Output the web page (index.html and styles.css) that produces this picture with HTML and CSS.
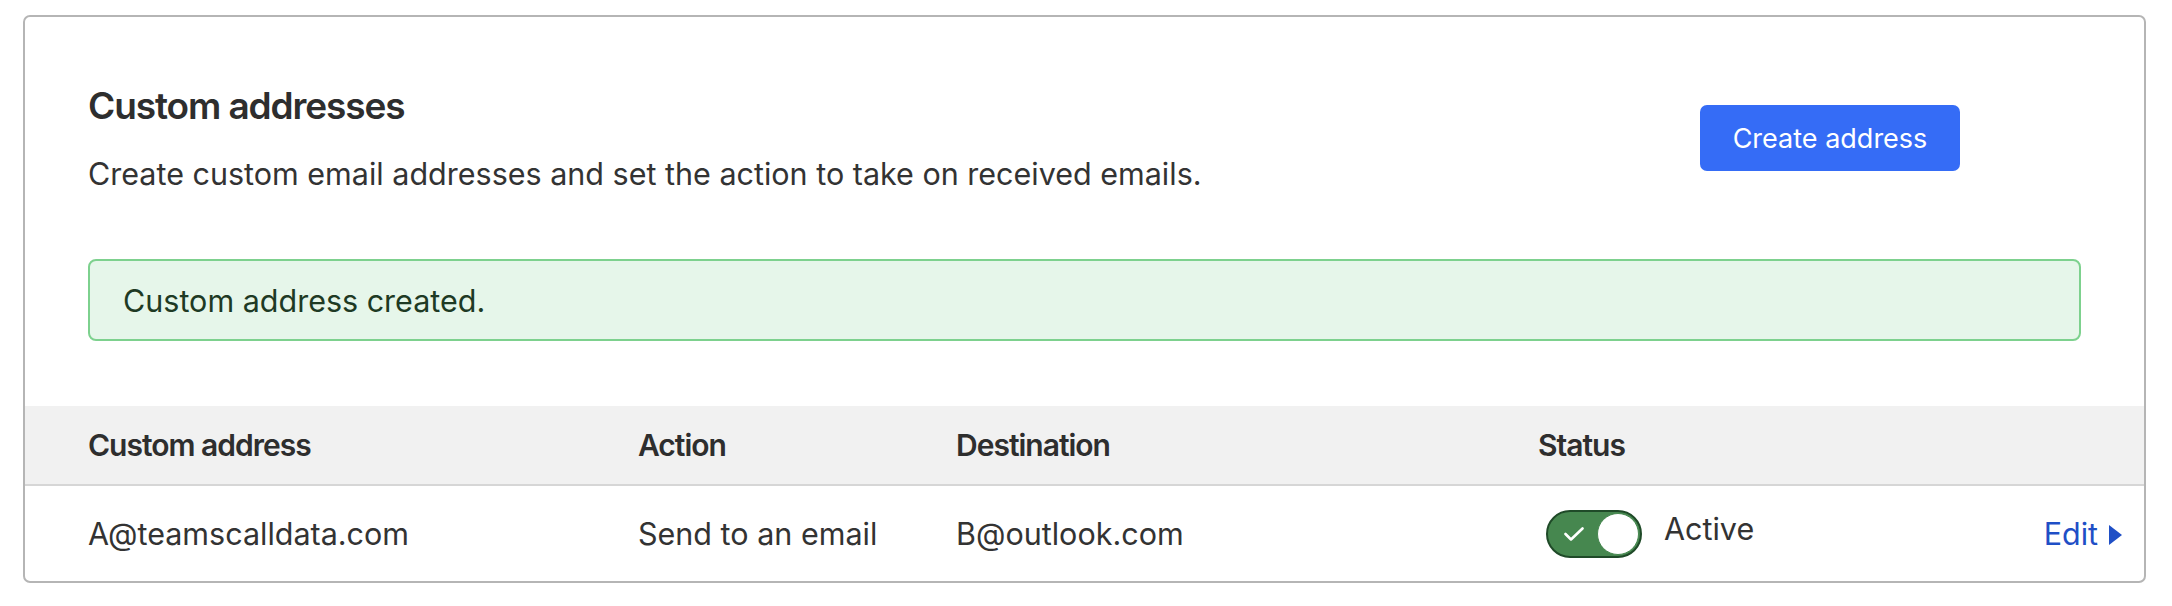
FILE: index.html
```html
<!DOCTYPE html>
<html lang="en">
<head>
<meta charset="utf-8">
<title>Custom addresses</title>
<link rel="stylesheet" href="styles.css">
</head>
<body>
<div class="page">
  <section class="card">
    <div class="head">
      <div class="head-text">
        <h1 class="title">Custom addresses</h1>
        <p class="desc">Create custom email addresses and set the action to take on received emails.</p>
      </div>
      <button class="btn-primary" type="button">Create address</button>
    </div>
    <div class="alert">Custom address created.</div>
    <div class="table">
      <div class="row row-head">
        <div class="cell">Custom address</div>
        <div class="cell">Action</div>
        <div class="cell">Destination</div>
        <div class="cell">Status</div>
        <div class="cell"></div>
      </div>
      <div class="row row-body">
        <div class="cell">A@teamscalldata.com</div>
        <div class="cell">Send to an email</div>
        <div class="cell">B@outlook.com</div>
        <div class="cell status">
          <span class="toggle">
            <svg class="check" viewBox="0 0 20 14" width="20" height="14"><path d="M1.5 7 L7 12.5 L18.5 1.5" fill="none" stroke="#fff" stroke-width="2.6" stroke-linecap="round" stroke-linejoin="round"/></svg>
            <span class="knob"></span>
          </span>
          <span class="status-label">Active</span>
        </div>
        <div class="cell edit-cell">
          <a class="edit" href="#">Edit<svg class="caret" viewBox="0 0 13 20" width="13" height="20"><path d="M0 0 L13 10 L0 20 Z" fill="#1f4fc6"/></svg></a>
        </div>
      </div>
    </div>
  </section>
</div>
</body>
</html>
```
FILE: styles.css
```css
* { box-sizing: border-box; }
html, body { margin: 0; padding: 0; background: #ffffff; }
body {
  font-family: Inter, "Noto Sans", "Liberation Sans", sans-serif;
  color: #333333;
}
.page {
  padding: 15px 26px 23px 23px;
}
.card {
  border: 2px solid #b5b5b5;
  border-radius: 7px;
  background: #fff;
  overflow: hidden;
}
.head {
  display: flex;
  align-items: center;
  justify-content: space-between;
  padding: 65px 184px 0 63px;
}
.title {
  margin: 0;
  font-size: 37px;
  line-height: 48px;
  font-weight: 600;
  letter-spacing: -1.1px;
  color: #2e2e2e;
}
.desc {
  margin: 24px 0 0;
  font-size: 30.5px;
  line-height: 40px;
  font-weight: 400;
  color: #333;
}
.btn-primary {
  width: 260px;
  height: 66px;
  border: 0;
  border-radius: 7px;
  background: #356cf6;
  color: #fff;
  font-family: inherit;
  font-size: 27px;
  font-weight: 400;
  cursor: pointer;
}
.alert {
  margin: 65px 63px 0;
  height: 82px;
  display: flex;
  align-items: center;
  padding: 0 33px;
  border: 2px solid #7dd18e;
  border-radius: 8px;
  background: #e6f6ea;
  color: #1e3a24;
  font-size: 30.5px;
}
.table {
  margin-top: 65px;
}
.row {
  display: grid;
  grid-template-columns: 550px 318px 582px 1fr auto;
  align-items: center;
  padding: 0 22px 0 63px;
}
.row-head {
  height: 80px;
  background: #f1f1f1;
  border-bottom: 2px solid #d6d6d6;
  font-weight: 600;
  font-size: 30px;
  letter-spacing: -1px;
  color: #2e2e2e;
}
.row-body {
  height: 95px;
  font-size: 30.5px;
  color: #333;
}
.status {
  display: flex;
  align-items: center;
  gap: 22px;
  padding-left: 8px;
}
.toggle {
  position: relative;
  display: inline-flex;
  align-items: center;
  flex: none;
  width: 96px;
  height: 48px;
  border-radius: 24px;
  background: #46874f;
  border: 2px solid #1f4a28;
  padding-left: 16px;
}
.check { display: block; flex: none; width: 20px; height: 14px; }
.knob {
  position: absolute;
  right: 1px;
  top: 1px;
  width: 42px;
  height: 42px;
  border-radius: 50%;
  background: #fff;
  border: 1.5px solid #46874f;
}
.status-label {
  margin-top: -10px;
  color: #333;
}
.edit-cell {
  display: flex;
  justify-content: flex-end;
}
.edit {
  display: inline-flex;
  align-items: center;
  gap: 11px;
  color: #1f4fc6;
  text-decoration: none;
  font-size: 30.5px;
  white-space: nowrap;
}
.caret { display: block; flex: none; width: 13px; height: 20px; margin-top: 2px; }
```
